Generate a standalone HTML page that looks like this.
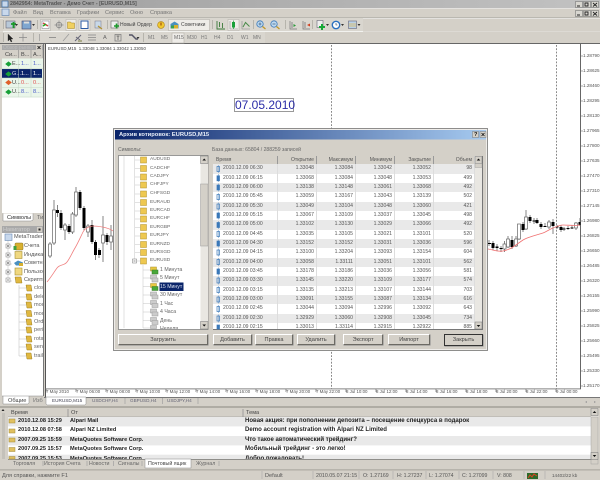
<!DOCTYPE html>
<html><head><meta charset="utf-8"><style>
html,body{margin:0;padding:0;width:600px;height:480px;overflow:hidden;background:#d4d0c8}
#w{position:relative;width:600px;height:480px;overflow:hidden;font:5.6px "Liberation Sans","Noto Sans CJK SC",sans-serif;color:#333;filter:blur(.3px)}
.a,.t{position:absolute}
.t{white-space:nowrap;line-height:8px}
svg{position:absolute;left:0;top:0}
.r{position:absolute;left:0;width:262px;height:9.33px;display:flex;line-height:9.33px;white-space:nowrap;font-size:5.1px}
.r span{display:block;text-align:right;box-sizing:border-box;padding-right:2px;border-right:.5px solid #ddd}
.r .c0{width:65px;text-align:left;padding-left:10px}
.r .c1,.r .c2,.r .c3,.r .c4{width:39px}
.r .c5{width:41px}
.g{background:#e9e9e9}.wh{background:#fff}
.b{position:absolute;box-sizing:border-box;border:1px solid;border-color:#fff #6c6a64 #6c6a64 #fff;background:#d4d0c8;text-align:center;line-height:10px;color:#444;box-shadow:.5px .5px 0 #888}
.mr{position:absolute;left:8px;width:582px;height:9.33px;line-height:9.33px;font-weight:bold;white-space:nowrap;color:#222}
.mr b{position:absolute;top:0}
.mr b.s{font-size:6.050px}
.h{position:absolute;line-height:8px;color:#444;padding-left:3px;height:9px;box-sizing:border-box}
.p{color:#555;font-size:4.600px}
.x{color:#555;font-size:4.400px}
.y{color:#666;font-size:4.800px}
.z{color:#666;font-size:5.200px}
.k{color:#666;font-size:5.300px}
.m{color:#777}
</style></head><body><div id="w">

<!-- title bar -->
<div class="a" style="left:0;top:0;width:600px;height:8px;background:linear-gradient(90deg,#9e9e9e,#c2c2c2)"></div>
<div class="t" style="left:10px;top:0;color:#555;font-weight:bold;font-size:5.300px">2842954: MetaTrader - Демо Счет - [EURUSD,M15]</div>

<!-- base svg -->
<svg width="600" height="480" viewBox="0 0 600 480">
<rect x="0" y="8" width="600" height=".6" fill="#eee"/>
<rect x="0" y="17" width="600" height=".6" fill="#aaa8a2"/>
<rect x="0" y="18" width="600" height=".6" fill="#eee"/>
<rect x="3" y="18" width="360" height="13" fill="#d9d6cf"/>
<rect x="3" y="31" width="360" height=".7" fill="#fff"/>
<rect x="0" y="31.500" width="600" height=".5" fill="#e6e4df"/>
<rect x="3" y="32" width="262" height="12" fill="#d9d6cf"/>
<rect x="0" y="43" width="600" height="1" fill="#666"/>
<!-- title icon -->
<rect x="2" y="1" width="6" height="6" fill="#c8d8ec" stroke="#3a6ea5" stroke-width=".7"/>
<rect x="2" y="9" width="7" height="6.500" fill="#c8d8ec" stroke="#6a8ab5" stroke-width=".7"/>
<!-- window buttons -->
<g fill="#d8d6d0" stroke="#777" stroke-width=".6">
<rect x="575.500" y="1.500" width="7" height="6"/><rect x="583.500" y="1.500" width="7" height="6"/><rect x="591.500" y="1.500" width="7" height="6"/>
<rect x="575.500" y="10.500" width="7" height="6"/><rect x="583.500" y="10.500" width="7" height="6"/><rect x="591.500" y="10.500" width="7" height="6"/></g>
<g fill="none" stroke="#222" stroke-width=".9">
<path d="M577 6h3M585 3h3v3h-3zM593 3l4 3.500M597 3l-4 3.500M577 15h3M585 12h3v3h-3zM593 12l4 3.500M597 12l-4 3.500"/></g>

<!-- toolbar separators -->
<g fill="#a8a59e"><rect x="3" y="20" width=".7" height="9"/><rect x="37" y="20" width=".7" height="9"/><rect x="107" y="20" width=".7" height="9"/><rect x="212" y="20" width=".7" height="9"/><rect x="253" y="20" width=".7" height="9"/><rect x="285" y="20" width=".7" height="9"/><rect x="312" y="20" width=".7" height="9"/><rect x="3" y="33" width=".7" height="9"/><rect x="33" y="33" width=".7" height="9"/><rect x="143" y="33" width=".7" height="9"/></g>
<!-- toolbar pressed -->
<g fill="#eeece8" stroke="#b8b5ae" stroke-width=".6"><rect x="40.500" y="19.500" width="10" height="11"/><rect x="66" y="19.500" width="10" height="11"/><rect x="79" y="19.500" width="11" height="11"/><rect x="168.500" y="19.500" width="41" height="11"/><rect x="228" y="19.500" width="11" height="11"/><rect x="172" y="33" width="12" height="10"/></g>
<!-- tb1 icons -->
<rect x="6" y="21" width="9" height="7" fill="#b8c8d8" stroke="#667" stroke-width=".6"/><path d="M11 24h5M13.500 22v6" stroke="#1a9a2a" stroke-width="1.800"/><path d="M15 24l3 0-1.500 2z" fill="#333"/>
<rect x="22" y="21" width="9" height="8" fill="#7fa6d0" stroke="#446" stroke-width=".6"/><rect x="24" y="21.500" width="5" height="2" fill="#ddd"/><path d="M32 24l3 0-1.500 2z" fill="#333"/>
<rect x="42" y="21" width="7" height="7.500" fill="#fff" stroke="#778" stroke-width=".5"/><path d="M43 23l5 3" stroke="#c44" stroke-width="1.500"/><path d="M43 26l3-2" stroke="#2a2" stroke-width="1.500"/>
<circle cx="59" cy="25" r="2.700" fill="none" stroke="#888" stroke-width=".8"/><path d="M59 20.500v9M54.500 25h9" stroke="#888" stroke-width=".7"/>
<path d="M67.500 22h3l1 1h3v5.500h-7z" fill="#f0d060" stroke="#a08020" stroke-width=".5"/>
<rect x="81" y="21" width="7" height="7.500" fill="#fff" stroke="#2a5aa5" stroke-width="1"/>
<rect x="95" y="21" width="6" height="7" fill="#c8d8e8" stroke="#778" stroke-width=".5"/><path d="M98 26l4 3" stroke="#b09030" stroke-width="1.200"/>
<rect x="111" y="21" width="7" height="7" fill="#eee" stroke="#666" stroke-width=".6"/><path d="M114 26h5M116.500 23.500v5" stroke="#1a9a2a" stroke-width="1.600"/>
<circle cx="161" cy="25" r="3.400" fill="#f0c830" stroke="#b08010" stroke-width=".6"/><rect x="160.400" y="22.500" width="1.200" height="3" fill="#a05010"/>
<path d="M170.500 24l4-2.500 4 2.500v4.500h-8z" fill="#4a90c0"/><rect x="174" y="25" width="4" height="3.500" fill="#d8b030"/><rect x="171" y="25.500" width="3" height="3" fill="#3aa050"/>
<path d="M217 21v8h8M219.500 22v5M222.500 23v5" stroke="#3a7a3a" stroke-width=".9" fill="none"/>
<path d="M230 21v8h8" stroke="#888" fill="none" stroke-width=".6"/><rect x="232" y="22" width="3" height="5.500" fill="#18a038"/><path d="M233.500 20.500v8.500" stroke="#18a038" stroke-width=".7"/>
<path d="M242 21v8h8" stroke="#888" fill="none" stroke-width=".6"/><path d="M243 27l2.500-4.500 4 4" stroke="#4a8a4a" fill="none"/>
<circle cx="260" cy="24" r="3.200" fill="#bcd8f0" stroke="#3a78b8" stroke-width=".8"/><path d="M262.500 26.500l3 2.500" stroke="#c0982a" stroke-width="1.300"/><path d="M258.500 24h3M260 22.500v3" stroke="#246" stroke-width=".6"/>
<circle cx="274" cy="24" r="3.200" fill="#bcd8f0" stroke="#3a78b8" stroke-width=".8"/><path d="M276.500 26.500l3 2.500" stroke="#c0982a" stroke-width="1.300"/><path d="M272.500 24h3" stroke="#246" stroke-width=".6"/>
<path d="M290 21v8h7" stroke="#777" fill="none" stroke-width=".7"/><path d="M292 22v6" stroke="#888"/><path d="M293.500 24l2.500 1.500-2.500 1.500z" fill="#2a9a3a"/>
<path d="M303 21v8h7" stroke="#777" fill="none" stroke-width=".7"/><path d="M305 22v6" stroke="#888"/><path d="M307 25l3-1.500v3z" fill="#d04020"/>
<rect x="317" y="20.500" width="6" height="7" fill="#eee" stroke="#667" stroke-width=".6"/><path d="M319 27h6M322 24v6" stroke="#18a838" stroke-width="2"/><path d="M326 24l3 0-1.500 2z" fill="#333"/>
<circle cx="336" cy="25" r="3.700" fill="#fff" stroke="#2a70c0" stroke-width="1.400"/><path d="M336 23v2h1.500" stroke="#246" stroke-width=".6" fill="none"/><path d="M341 24l3 0-1.500 2z" fill="#333"/>
<rect x="348.500" y="21" width="8" height="7.500" fill="#b8d0e8" stroke="#667" stroke-width=".6"/><path d="M349 24h7M349 26h7" stroke="#e0b850" stroke-width=".8"/><path d="M357.500 24l3 0-1.500 2z" fill="#333"/>
<!-- tb2 icons -->
<path d="M8 34v7l1.800-1.500 1.200 2.500 1-.5-1.200-2.500h2.200z" fill="#222" stroke="#222" stroke-width=".3"/>
<path d="M23 33.500v8M19 37.500h8" stroke="#888" stroke-width=".7"/>
<path d="M39.500 34v7" stroke="#999" stroke-width=".7"/>
<path d="M49 37.500h7" stroke="#777" stroke-width=".7"/>
<path d="M63 41l6-7" stroke="#999" stroke-width=".7"/>
<path d="M75 41l6-6M76 37l4 3" stroke="#667" stroke-width="1"/><rect x="78" y="40" width="4" height="2" fill="#aa8"/>
<path d="M88 35h8M88 37.500h8M88 40h8" stroke="#888" stroke-width=".7"/>
<rect x="115" y="34.500" width="6" height="6.500" fill="none" stroke="#777" stroke-width=".7"/><path d="M116.500 36h3M118 36v4" stroke="#555" stroke-width=".7"/>
<path d="M129 35h3l4 4h2" stroke="#556" stroke-width="1.400" fill="none"/><path d="M136.500 37l3 0-1.500 2z" fill="#333"/>

<!-- left panel -->
<rect x="2" y="44" width="42" height="178" fill="#d4d0c8"/>
<rect x="2" y="45" width="41" height="5.500" fill="#a9a9a9"/>
<rect x="2" y="50" width="42" height="170" fill="#fff"/>
<rect x="2" y="50" width="42" height="8.500" fill="#d4d0c8"/>
<rect x="2" y="58.500" width="42" height="39" fill="#eaf6ea"/>
<rect x="2" y="69" width="40" height="9" fill="#0a246a"/>
<g stroke="#c6d8c6" stroke-width=".5"><path d="M2 68.800h41M2 78h41M2 87.500h41M2 97h41M18.500 58v39M31 58v39"/></g>
<path d="M18.500 50v8M31 50v8M43 50v8" stroke="#888" stroke-width=".6"/>
<path d="M6 64l2.500-2 2.500 2-2.500 2z" fill="#18a038" stroke="#18a038"/>
<path d="M6 74l2.500-2 2.500 2-2.500 2z" fill="#18a038" stroke="#18a038"/>
<path d="M6 82.500l2.500-2 2.500 2-2.500 2z" fill="#e0602a" stroke="#e0602a"/>
<path d="M6 92l2.500-2 2.500 2-2.500 2z" fill="#18a038" stroke="#18a038"/>
<rect x="36" y="45" width="6" height="5" fill="#d4d0c8"/><path d="M37.500 46l3 3M40.500 46l-3 3" stroke="#111" stroke-width=".8"/>
<rect x="2" y="213" width="41" height="9" fill="#d4d0c8"/>
<path d="M3 213.500v7.500h28l2-1v-6.500" fill="#fff" stroke="#888" stroke-width=".5"/>
<rect x="43" y="44" width="1" height="352" fill="#777"/>
<rect x="2" y="226" width="41" height="7" fill="#a9a9a9"/>
<rect x="2" y="233" width="41" height="163" fill="#fff"/>
<rect x="2" y="396" width="41" height="10" fill="#d4d0c8"/>
<path d="M3 396v8h25l1-1v-7" fill="#fff" stroke="#888" stroke-width=".5"/>
<path d="M2 396h41" stroke="#888" stroke-width=".5"/>
<rect x="37" y="227" width="5" height="5" fill="#d4d0c8"/><rect x="38.500" y="228.500" width="2" height="2" fill="#222"/>
<path d="M8 240v42M8 246h4M8 255h4M8 264h4M8 272h4M8 281h4M19 285v71M19 288h7M19 297h7M19 305h7M19 314h7M19 322h7M19 330h7M19 339h7M19 347h7M19 356h7" stroke="#bbb" stroke-width=".5"/>
<g fill="#fff" stroke="#777" stroke-width=".5"><rect x="6" y="244" width="4" height="4"/><rect x="6" y="253" width="4" height="4"/><rect x="6" y="261" width="4" height="4"/><rect x="6" y="270" width="4" height="4"/><rect x="6" y="278" width="4" height="4"/></g>
<path d="M7 246h2M8 245v2M7 255h2M8 254v2M7 263h2M8 262v2M7 272h2M8 271v2M7 280h2" stroke="#222" stroke-width=".5"/>
<rect x="5" y="234" width="7" height="6.500" fill="#c8d8ec" stroke="#6a8ab5" stroke-width=".6"/>
<rect x="15" y="243" width="8" height="7" rx="1" fill="#d8b030" stroke="#8a7020" stroke-width=".5"/><rect x="13.500" y="246" width="3" height="4" fill="#40a040"/>
<rect x="15" y="251.500" width="7" height="7" fill="#f0d880" stroke="#a89030" stroke-width=".6"/>
<path d="M14 263l4-2.500 5 2-1 3h-6z" fill="#4a90c0"/><rect x="19" y="263" width="4" height="3" fill="#d8b030"/>
<rect x="15" y="268" width="7" height="7" fill="#f0d880" stroke="#a89030" stroke-width=".6"/>
<path d="M15 277h6l1 6h-6z" fill="#e0b840" stroke="#a08020" stroke-width=".5"/>
<g fill="#e0b840" stroke="#a08020" stroke-width=".5"><path d="M26 285h5l1 6h-5z"/><path d="M26 294h5l1 6h-5z"/><path d="M26 302h5l1 6h-5z"/><path d="M26 310.500h5l1 6h-5z"/><path d="M26 319h5l1 6h-5z"/><path d="M26 327h5l1 6h-5z"/><path d="M26 336h5l1 6h-5z"/><path d="M26 344h5l1 6h-5z"/><path d="M26 353h5l1 6h-5z"/></g>

<!-- chart -->
<rect x="45" y="44" width="536" height="345" fill="#fff"/>
<rect x="581" y="44" width="19" height="353" fill="#fff"/>
<rect x="45" y="389" width="555" height="8" fill="#fff"/>
<rect x="45" y="44" width="1" height="353" fill="#555"/>
<rect x="580" y="44" width="1" height="345" fill="#666"/>
<rect x="45" y="388.500" width="536" height=".8" fill="#666"/>
<path d="M331.500 45v344M556.500 45v344" stroke="#555" stroke-width=".7" stroke-dasharray="1.800 1.500"/>
<path d="M581 56h2M581 71h2M581 86h2M581 101h2M581 116h2M581 131h2M581 146h2M581 161h2M581 176h2M581 191h2M581 206h2M581 221h2M581 236h2M581 251h2M581 266h2M581 281h2M581 296h2M581 311h2M581 326h2M581 341h2M581 356h2M581 371h2M581 386h2M46 389v3M76 389v3M106 389v3M136 389v3M166 389v3M196 389v3M226 389v3M256 389v3M286 389v3M316 389v3M346 389v3M376 389v3M406 389v3M436 389v3M466 389v3M496 389v3M526 389v3M556 389v3" stroke="#555" stroke-width=".6"/>
<!-- left candles -->
<g stroke="#666" stroke-width=".8">
<path d="M50 242v16M54 200v45M57.500 205v12M61 210v20M65 223v17M69 224v10M72.500 212v22M76 187v30M80 190v20M84 206v24M88 224v13M92 220v24M95.500 240v20M99 248v10M103 216v46M107 233v12M111 225v25M115 228v12"/>
</g>
<g fill="#fff" stroke="#666" stroke-width=".7">
<rect x="48.500" y="244" width="3" height="12"/><rect x="52.500" y="210" width="3" height="33"/><rect x="63.500" y="225" width="3" height="5"/><rect x="71" y="214" width="3" height="18"/><rect x="74.500" y="192" width="3" height="23"/><rect x="86.500" y="226" width="3" height="6"/><rect x="101.500" y="235" width="3" height="8"/><rect x="109.500" y="236" width="3" height="6"/></g>
<g fill="#000"><rect x="56" y="210" width="3" height="3"/><rect x="59.500" y="213" width="3" height="15"/><rect x="67.500" y="226" width="3" height="6"/><rect x="78.500" y="192" width="3" height="16"/><rect x="82.500" y="208" width="3" height="20"/><rect x="90.500" y="225" width="3" height="17"/><rect x="94" y="242" width="3" height="13"/><rect x="98" y="250" width="3" height="5"/><rect x="105.500" y="235" width="3" height="7"/></g>
<path d="M47 282C52 276 54 272 57 268S64 266 67 262 72 253 75 248 81 236 83 232 90 226 93 226 108 227 113 231" fill="none" stroke="#f08080" stroke-width=".8"/>
<!-- right candles -->
<path d="M489 240v6M493 241v9M497 244v7M501 246v6M504.500 241v11M508 236v12M512 236v13M516 236v11M519 224v16M523 222v10M526 210v20M530 215v8M534 218v6M537 218v6M541 222v7M545 223v4M549 220v9M553 219v15M557 225v4M561 225v7M564 227v4M568 226v4M572 225v4M576 222v8M580 218v8" stroke="#666" stroke-width=".8"/>
<g fill="#fff" stroke="#666" stroke-width=".7"><rect x="503" y="244" width="3" height="5"/><rect x="506.500" y="239" width="3" height="8"/><rect x="514.500" y="239" width="3" height="7"/><rect x="517.500" y="224" width="3" height="15"/><rect x="524.500" y="217" width="3" height="12"/><rect x="547.500" y="222" width="3" height="5"/><rect x="574.500" y="223" width="3" height="5"/></g>
<g fill="#000"><rect x="488" y="243" width="3" height="1"/><rect x="491.500" y="243" width="3" height="5"/><rect x="495.500" y="246.500" width="3" height="1.500"/><rect x="499.500" y="248" width="3" height="1"/><rect x="510.500" y="240" width="3" height="7"/><rect x="521.500" y="224" width="3" height="6"/><rect x="528.500" y="217" width="3" height="4"/><rect x="532.500" y="220.500" width="3" height="1"/><rect x="535.500" y="220" width="3" height="3"/><rect x="539.500" y="224" width="3" height="3"/><rect x="543.500" y="226" width="3" height="1"/><rect x="551.500" y="222" width="3" height="4"/><rect x="555.500" y="226.500" width="3" height="1"/><rect x="559.500" y="227" width="3" height="3"/><rect x="562.500" y="228.500" width="3" height="1"/><rect x="566.500" y="228" width="3" height="1"/><rect x="570.500" y="227.500" width="3" height="1"/><rect x="578.500" y="222" width="2" height="3"/></g>
<path d="M488 249C494 250 498 252 503 251S510 249 513 247 520 242 523 240 530 237 533 236 540 234 543 233 550 229 553 228 559 225 563 225 575 226 580 225" fill="none" stroke="#f07070" stroke-width=".8"/>
<!-- chart tabs -->
<rect x="44" y="397" width="556" height="10" fill="#d4d0c8"/>
<rect x="44" y="397" width="556" height="1" fill="#777"/>
<path d="M46 397v7l1 1h38l1-1v-7z" fill="#fff" stroke="#888" stroke-width=".5"/>
<path d="M125 398v6M162.500 398v6M198 398v6" stroke="#999" stroke-width=".6"/>
<path d="M587 401l-2 1 2 1zM594 401l2 1-2 1z" fill="#999"/>
<rect x="0" y="406.500" width="600" height="1" fill="#8a8780"/>

<!-- terminal -->
<rect x="0" y="408" width="7" height="62" fill="#d4d0c8"/>
<path d="M3 409l1.500 2H1.500z" fill="#222"/>
<rect x="2" y="413" width="3" height="46" fill="#bdbab3" opacity=".7"/>
<rect x="8" y="408.500" width="583" height="8.500" fill="#d4d0c8"/>
<path d="M8 417h583" stroke="#888" stroke-width=".6"/>
<path d="M68 409v8M243 409v8" stroke="#888" stroke-width=".7"/>
<rect x="8" y="417" width="583" height="42" fill="#fff"/>
<rect x="8" y="417" width="583" height="9.400" fill="#e9e9e9"/>
<rect x="8" y="436" width="583" height="9.400" fill="#e9e9e9"/>
<rect x="8" y="454.700" width="583" height="4.300" fill="#e9e9e9"/>
<path d="M8 459.300h583" stroke="#666" stroke-width=".7"/>
<rect x="591" y="408" width="7.500" height="52" fill="#ece9e3"/>
<rect x="591" y="417" width="7" height="47" fill="#d4d0c8" stroke="#999" stroke-width=".4"/>
<rect x="591" y="408.500" width="7" height="7" fill="#d4d0c8" stroke="#777" stroke-width=".5"/><path d="M594.500 411l1.800 2h-3.600z" fill="#111"/>
<rect x="591" y="452.500" width="7" height="7" fill="#d4d0c8" stroke="#777" stroke-width=".5"/><path d="M594.500 457l1.800-2h-3.600z" fill="#111"/>
<g fill="#e0c060" stroke="#a08838" stroke-width=".5"><rect x="9" y="419" width="6" height="4"/><rect x="9" y="429" width="6" height="4"/><rect x="9" y="438" width="6" height="4"/><rect x="9" y="447.500" width="6" height="4"/><rect x="9" y="456.500" width="6" height="2.500"/></g>
<rect x="145" y="459" width="46" height="9" fill="#fff" stroke="#888" stroke-width=".5"/>
<path d="M43 461v5M87 461v5M113.500 461v5M142 461v5M219 461v5" stroke="#999" stroke-width=".6"/>
<rect x="0" y="469.500" width="600" height=".8" fill="#9a978f"/>
<path d="M262 471v8M313 471v8M359 471v8M393 471v8M426 471v8M459 471v8M493 471v8M524 471v8M545 471v8" stroke="#aaa" stroke-width=".6"/>
<rect x="527" y="473" width="11" height="6" fill="#2a6a2a"/><path d="M528 478l2-3 2 2 2-3 3 2" stroke="#e04020" stroke-width="1" fill="none"/>

<!-- dialog -->
<rect x="113.500" y="128.500" width="374" height="222" fill="#d4d0c8" stroke="#777" stroke-width=".8"/>
<rect x="114.500" y="129.500" width="372" height="220" fill="none" stroke="#fff" stroke-width=".6"/>
<defs><linearGradient id="tg" x1="0" x2="1" y1="0" y2="0"><stop offset="0" stop-color="#0a246a"/><stop offset="1" stop-color="#a6caf0"/></linearGradient></defs>
<rect x="115" y="130" width="371" height="9.500" fill="url(#tg)"/>
<rect x="472.500" y="131.500" width="6" height="6" fill="#d4d0c8" stroke="#666" stroke-width=".4"/>
<rect x="480" y="131.500" width="6" height="6" fill="#d4d0c8" stroke="#666" stroke-width=".4"/>
<path d="M481.500 133l3 3M484.500 133l-3 3" stroke="#111" stroke-width=".8"/>
<!-- tree box -->
<rect x="118.500" y="155.500" width="89.500" height="174" fill="#fff" stroke="#777" stroke-width=".7"/>
<rect x="200.500" y="156" width="7.500" height="173" fill="#e9e7e2"/>
<rect x="200.500" y="156" width="7.500" height="7.500" fill="#d4d0c8" stroke="#777" stroke-width=".5"/><path d="M204.200 158.500l1.800 2h-3.600z" fill="#111"/>
<rect x="200.500" y="321.500" width="7.500" height="7.500" fill="#d4d0c8" stroke="#777" stroke-width=".5"/><path d="M204.200 326.500l1.800-2h-3.600z" fill="#111"/>
<rect x="200.500" y="184" width="7.500" height="62" fill="#d4d0c8" stroke="#999" stroke-width=".5"/>
<path d="M124 156v172M134.500 156v104M135 160h5M135 168.500h5M135 177h5M135 185h5M135 194h5M135 202.500h5M135 211h5M135 219h5M135 227.500h5M135 236h5M135 244.500h5M135 252.500h5M135 261h5M143 265v63M143 270h10M143 278h10M143 286.500h10M143 295h10M143 303.500h10M143 312h10M143 320.500h10M143 328h10" stroke="#c4c4c4" stroke-width=".5"/>
<rect x="132.500" y="259" width="4" height="4" fill="#fff" stroke="#777" stroke-width=".5"/><path d="M133.500 261h2" stroke="#222" stroke-width=".5"/>
<g fill="#eec850" stroke="#b09028" stroke-width=".5"><rect x="140.500" y="157" width="6" height="6"/><rect x="140.500" y="165.500" width="6" height="6"/><rect x="140.500" y="174" width="6" height="6"/><rect x="140.500" y="182" width="6" height="6"/><rect x="140.500" y="191" width="6" height="6"/><rect x="140.500" y="199.500" width="6" height="6"/><rect x="140.500" y="208" width="6" height="6"/><rect x="140.500" y="216" width="6" height="6"/><rect x="140.500" y="224.500" width="6" height="6"/><rect x="140.500" y="233" width="6" height="6"/><rect x="140.500" y="241.500" width="6" height="6"/><rect x="140.500" y="249.500" width="6" height="6"/><rect x="140.500" y="258" width="6" height="6"/></g>
<rect x="159.500" y="282.500" width="24" height="8.500" fill="#0a246a"/>
<g stroke-width=".5"><rect x="150.500" y="267" width="6" height="4" fill="#e8c840" stroke="#a89030"/><rect x="152" y="270" width="6" height="4" fill="#48a838" stroke="#387828"/>
<rect x="150.500" y="275" width="6" height="4" fill="#ccc" stroke="#999"/><rect x="152" y="278" width="6" height="4" fill="#ccc" stroke="#999"/>
<rect x="150.500" y="283.500" width="6" height="4" fill="#e8c840" stroke="#a89030"/><rect x="152" y="286.500" width="6" height="4" fill="#48a838" stroke="#387828"/>
<rect x="150.500" y="292" width="6" height="4" fill="#ccc" stroke="#999"/><rect x="152" y="295" width="6" height="4" fill="#ccc" stroke="#999"/>
<rect x="150.500" y="300.500" width="6" height="4" fill="#ccc" stroke="#999"/><rect x="152" y="303.500" width="6" height="4" fill="#ccc" stroke="#999"/>
<rect x="150.500" y="309" width="6" height="4" fill="#ccc" stroke="#999"/><rect x="152" y="312" width="6" height="4" fill="#ccc" stroke="#999"/>
<rect x="150.500" y="317.500" width="6" height="4" fill="#ccc" stroke="#999"/><rect x="152" y="320.500" width="6" height="4" fill="#ccc" stroke="#999"/>
<rect x="150.500" y="325.500" width="6" height="3" fill="#ccc" stroke="#999"/></g>
</svg>

<!-- menu + toolbar text -->
<div class="t m" style="left:13px;top:9px">Файл</div>
<div class="t m" style="left:33px;top:9px">Вид</div>
<div class="t m" style="left:50px;top:9px">Вставка</div>
<div class="t m" style="left:77px;top:9px">Графики</div>
<div class="t m" style="left:105px;top:9px">Сервис</div>
<div class="t m" style="left:130px;top:9px">Окно</div>
<div class="t m" style="left:150px;top:9px">Справка</div>
<div class="t" style="left:120px;top:21px;color:#444;font-size:5px">Новый Ордер</div>
<div class="t" style="left:181px;top:21px;color:#444;font-size:5px">Советники</div>
<div class="t m" style="left:148px;top:34px;font-size:5px">M1</div>
<div class="t m" style="left:161px;top:34px;font-size:5px">M5</div>
<div class="t" style="left:174px;top:34px;color:#666;font-size:5px">M15</div>
<div class="t m" style="left:187px;top:34px;font-size:5px">M30</div>
<div class="t m" style="left:201px;top:34px;font-size:5px">H1</div>
<div class="t m" style="left:214px;top:34px;font-size:5px">H4</div>
<div class="t m" style="left:227px;top:34px;font-size:5px">D1</div>
<div class="t m" style="left:241px;top:34px;font-size:5px">W1</div>
<div class="t m" style="left:253px;top:34px;font-size:5px">MN</div>
<div class="t" style="left:103px;top:34px;color:#666">A</div>

<!-- price axis -->
<div class="t p" style="left:583px;top:52px">1.28790</div>
<div class="t p" style="left:583px;top:67px">1.28625</div>
<div class="t p" style="left:583px;top:82px">1.28460</div>
<div class="t p" style="left:583px;top:97px">1.28295</div>
<div class="t p" style="left:583px;top:112px">1.28130</div>
<div class="t p" style="left:583px;top:127px">1.27965</div>
<div class="t p" style="left:583px;top:142px">1.27800</div>
<div class="t p" style="left:583px;top:157px">1.27635</div>
<div class="t p" style="left:583px;top:172px">1.27470</div>
<div class="t p" style="left:583px;top:187px">1.27310</div>
<div class="t p" style="left:583px;top:202px">1.27145</div>
<div class="t p" style="left:583px;top:217px">1.26980</div>
<div class="t p" style="left:583px;top:232px">1.26825</div>
<div class="t p" style="left:583px;top:247px">1.26650</div>
<div class="t p" style="left:583px;top:262px">1.26485</div>
<div class="t p" style="left:583px;top:277px">1.26320</div>
<div class="t p" style="left:583px;top:292px">1.26155</div>
<div class="t p" style="left:583px;top:307px">1.25990</div>
<div class="t p" style="left:583px;top:322px">1.25825</div>
<div class="t p" style="left:583px;top:337px">1.25660</div>
<div class="t p" style="left:583px;top:352px">1.25495</div>
<div class="t p" style="left:583px;top:367px">1.25330</div>
<div class="t p" style="left:583px;top:382px">1.25170</div>

<!-- time axis -->
<div class="t x" style="left:46px;top:388px">7 May 2010</div>
<div class="t x" style="left:76px;top:388px">7 May 06:00</div>
<div class="t x" style="left:106px;top:388px">7 May 08:00</div>
<div class="t x" style="left:136px;top:388px">7 May 10:00</div>
<div class="t x" style="left:166px;top:388px">7 May 12:00</div>
<div class="t x" style="left:196px;top:388px">7 May 14:00</div>
<div class="t x" style="left:226px;top:388px">7 May 16:00</div>
<div class="t x" style="left:256px;top:388px">7 May 18:00</div>
<div class="t x" style="left:286px;top:388px">7 May 20:00</div>
<div class="t x" style="left:316px;top:388px">7 May 22:00</div>
<div class="t x" style="left:346px;top:388px">8 Jul 10:00</div>
<div class="t x" style="left:376px;top:388px">8 Jul 12:00</div>
<div class="t x" style="left:406px;top:388px">8 Jul 14:00</div>
<div class="t x" style="left:436px;top:388px">8 Jul 16:00</div>
<div class="t x" style="left:466px;top:388px">8 Jul 18:00</div>
<div class="t x" style="left:496px;top:388px">8 Jul 20:00</div>
<div class="t x" style="left:526px;top:388px">8 Jul 22:00</div>
<div class="t x" style="left:556px;top:388px">9 Jul 00:00</div>

<!-- chart text -->
<div class="t" style="left:48px;top:45px;color:#444;font-size:4.400px">EURUSD,M15&nbsp; 1.33048 1.33084 1.33042 1.33050</div>
<div class="a" style="left:234px;top:98px;width:60px;height:14px;box-sizing:border-box;border:1px solid #999;color:#2a2ca8;font-size:12px;line-height:12px;text-align:center;background:#fff;white-space:nowrap">07.05.2010</div>

<!-- left panel text -->
<div class="t" style="left:3px;top:43.500px;color:#bbb;font-size:5px">Обзор рынка</div>
<div class="t" style="left:5px;top:50.500px;color:#444">Си...</div><div class="t" style="left:21px;top:50.500px;color:#444">B...</div><div class="t" style="left:33px;top:50.500px;color:#444">A...</div>
<div class="t" style="left:12px;top:60px;color:#444">E...</div><div class="t" style="left:21px;top:60px;color:#4a5ac8">1...</div><div class="t" style="left:33px;top:60px;color:#4a5ac8">1...</div>
<div class="t" style="left:12px;top:70px;color:#dde">G...</div><div class="t" style="left:21px;top:70px;color:#fff">1...</div><div class="t" style="left:33px;top:70px;color:#fff">1...</div>
<div class="t" style="left:12px;top:79px;color:#444">U...</div><div class="t" style="left:21px;top:79px;color:#e05050">0...</div><div class="t" style="left:33px;top:79px;color:#e05050">0...</div>
<div class="t" style="left:12px;top:88px;color:#444">U...</div><div class="t" style="left:21px;top:88px;color:#4a5ac8">8...</div><div class="t" style="left:33px;top:88px;color:#4a5ac8">8...</div>
<div class="t" style="left:7px;top:214px">Символы</div>
<div class="t" style="left:37px;top:214px;color:#666">Ти</div>
<div class="t" style="left:3px;top:225.500px;color:#ccc">Навигатор</div>
<div class="t" style="left:14px;top:233px;color:#555">MetaTrader</div>
<div class="t" style="left:24px;top:242px;color:#555">Счета</div>
<div class="a" style="left:24px;top:251px;width:19px;height:34px;overflow:hidden;color:#555">
<div class="t" style="left:0;top:0">Индикат</div>
<div class="t" style="left:0;top:8px">Советник</div>
<div class="t" style="left:0;top:16.500px">Пользов</div>
<div class="t" style="left:0;top:25px">Скрипты</div></div>
<div class="a" style="left:34px;top:284px;width:9px;height:76px;overflow:hidden;color:#666">
<div class="t" style="left:0;top:0">close</div><div class="t" style="left:0;top:9px">delete</div><div class="t" style="left:0;top:17px">modify</div><div class="t" style="left:0;top:25.500px">modify</div><div class="t" style="left:0;top:34px">Order</div><div class="t" style="left:0;top:42px">period</div><div class="t" style="left:0;top:51px">rotate</div><div class="t" style="left:0;top:59px">send</div><div class="t" style="left:0;top:68px">trail</div></div>
<div class="t" style="left:8px;top:397px;color:#444">Общие</div>
<div class="t" style="left:33px;top:397px;color:#777">Изб</div>

<!-- chart tabs -->
<div class="t" style="left:52px;top:397px;color:#445;font-size:4.700px">EURUSD,M15</div>
<div class="t" style="left:92px;top:397px;color:#667;font-size:4.600px">USDCHF,H4</div>
<div class="t" style="left:130px;top:397px;color:#667;font-size:4.600px">GBPUSD,H4</div>
<div class="t" style="left:167px;top:397px;color:#667;font-size:4.600px">USDJPY,H4</div>

<!-- terminal text -->
<div class="h" style="left:8px;top:408.500px;width:60px">Время</div>
<div class="h" style="left:68px;top:408.500px;width:175px">От</div>
<div class="h" style="left:243px;top:408.500px;width:200px">Тема</div>
<div class="mr" style="top:417px"><b style="left:10px">2010.12.08 15:29</b><b style="left:62px">Alpari Mail</b><b class="s" style="left:237px">Новая акция: при пополнении депозита – посещение спецкурса в подарок</b></div>
<div class="mr" style="top:426.300px"><b style="left:10px">2010.12.08 07:58</b><b style="left:62px">Alpari NZ Limited</b><b class="s" style="left:237px">Demo account registration with Alpari NZ Limited</b></div>
<div class="mr" style="top:435.700px"><b style="left:10px">2007.09.25 15:59</b><b style="left:62px">MetaQuotes Software Corp.</b><b class="s" style="left:237px">Что такое автоматический трейдинг?</b></div>
<div class="mr" style="top:445px"><b style="left:10px">2007.09.25 15:57</b><b style="left:62px">MetaQuotes Software Corp.</b><b class="s" style="left:237px">Мобильный трейдинг - это легко!</b></div>
<div class="a" style="left:8px;top:454.700px;width:582px;height:4.500px;overflow:hidden"><div class="mr" style="left:0;top:0"><b style="left:10px">2007.09.25 15:53</b><b style="left:62px">MetaQuotes Software Corp.</b><b class="s" style="left:237px">Добро пожаловать!</b></div></div>
<div class="t k" style="left:13px;top:460px">Торговля</div>
<div class="t k" style="left:44px;top:460px">История Счета</div>
<div class="t k" style="left:89px;top:460px">Новости</div>
<div class="t k" style="left:118px;top:460px">Сигналы</div>
<div class="t k" style="left:148px;top:460px;color:#444">Почтовый ящик</div>
<div class="t k" style="left:196px;top:460px">Журнал</div>

<!-- status -->
<div class="t" style="left:2px;top:472px;color:#555">Для справки, нажмите F1</div>
<div class="t" style="left:265px;top:472px;color:#555">Default</div>
<div class="t" style="left:316px;top:472px;color:#555;font-size:5.300px">2010.05.07 21:15</div>
<div class="t" style="left:363px;top:472px;color:#555;font-size:5.200px">O: 1.27169</div>
<div class="t" style="left:397px;top:472px;color:#555;font-size:5.200px">H: 1.27237</div>
<div class="t" style="left:429px;top:472px;color:#555;font-size:5.200px">L: 1.27074</div>
<div class="t" style="left:462px;top:472px;color:#555;font-size:5.200px">C: 1.27099</div>
<div class="t" style="left:497px;top:472px;color:#555;font-size:5.200px">V: 808</div>
<div class="t" style="left:552px;top:472px;color:#555;font-size:4.600px">14402/22 kb</div>

<!-- dialog text -->
<div class="t" style="left:119px;top:131px;color:#e8eef8;font-weight:bold;font-size:5.800px">Архив котировок: EURUSD,M15</div>
<div class="t" style="left:474px;top:131px;color:#111;font-weight:bold">?</div>
<div class="t" style="left:118px;top:146px;color:#666;font-size:5.100px">Символы:</div>
<div class="t" style="left:212px;top:146px;color:#666;font-size:5.100px">База данных: 65804 / 288259 записей</div>
<div class="t y" style="left:150px;top:156px">AUDUSD</div>
<div class="t y" style="left:150px;top:164.500px">CADCHF</div>
<div class="t y" style="left:150px;top:173px">CADJPY</div>
<div class="t y" style="left:150px;top:181px">CHFJPY</div>
<div class="t y" style="left:150px;top:190px">CHFSGD</div>
<div class="t y" style="left:150px;top:198.500px">EURAUD</div>
<div class="t y" style="left:150px;top:207px">EURCAD</div>
<div class="t y" style="left:150px;top:215px">EURCHF</div>
<div class="t y" style="left:150px;top:223.500px">EURGBP</div>
<div class="t y" style="left:150px;top:232px">EURJPY</div>
<div class="t y" style="left:150px;top:240.500px">EURNZD</div>
<div class="t y" style="left:150px;top:248.500px">EURSGD</div>
<div class="t y" style="left:150px;top:257px">EURUSD</div>
<div class="t z" style="left:160px;top:266px">1 Минута</div>
<div class="t z" style="left:160px;top:274px">5 Минут</div>
<div class="t z" style="left:160px;top:282.500px;color:#d8e0f0">15 Минут</div>
<div class="t z" style="left:160px;top:291px">30 Минут</div>
<div class="t z" style="left:160px;top:299.500px">1 Час</div>
<div class="t z" style="left:160px;top:308px">4 Часа</div>
<div class="t z" style="left:160px;top:316.500px">День</div>
<div class="a z" style="left:160px;top:325px;width:30px;height:4px;overflow:hidden;line-height:8px">Неделя</div>

<!-- table -->
<div class="a" style="left:212.500px;top:155.500px;width:270px;height:174px;background:#fff;border:.6px solid #777;box-sizing:border-box"></div>
<div class="a" style="left:213px;top:156px;width:262px;height:173px;overflow:hidden;color:#555">
<div class="r" style="top:0;height:8px;line-height:8px;background:#d4d0c8"><span class="c0" style="padding-left:3px;border-right:1px solid #999">Время</span><span class="c1" style="border-right:1px solid #999">Открытие</span><span class="c2" style="border-right:1px solid #999">Максимум</span><span class="c3" style="border-right:1px solid #999">Минимум</span><span class="c4" style="border-right:1px solid #999">Закрытие</span><span class="c5">Объем</span></div>
<div class="r g" style="top:8.300px"><span class="c0">2010.12.09 06:30</span><span class="c1">1.33048</span><span class="c2">1.33084</span><span class="c3">1.33042</span><span class="c4">1.33052</span><span class="c5">98</span></div>
<div class="r wh" style="top:17.630px"><span class="c0">2010.12.09 06:15</span><span class="c1">1.33068</span><span class="c2">1.33084</span><span class="c3">1.33048</span><span class="c4">1.33053</span><span class="c5">499</span></div>
<div class="r g" style="top:26.960px"><span class="c0">2010.12.09 06:00</span><span class="c1">1.33138</span><span class="c2">1.33148</span><span class="c3">1.33061</span><span class="c4">1.33068</span><span class="c5">492</span></div>
<div class="r wh" style="top:36.290px"><span class="c0">2010.12.09 05:45</span><span class="c1">1.33059</span><span class="c2">1.33167</span><span class="c3">1.33043</span><span class="c4">1.33139</span><span class="c5">502</span></div>
<div class="r g" style="top:45.620px"><span class="c0">2010.12.09 05:30</span><span class="c1">1.33049</span><span class="c2">1.33104</span><span class="c3">1.33048</span><span class="c4">1.33060</span><span class="c5">421</span></div>
<div class="r wh" style="top:54.950px"><span class="c0">2010.12.09 05:15</span><span class="c1">1.33067</span><span class="c2">1.33109</span><span class="c3">1.33037</span><span class="c4">1.33045</span><span class="c5">498</span></div>
<div class="r g" style="top:64.280px"><span class="c0">2010.12.09 05:00</span><span class="c1">1.33102</span><span class="c2">1.33130</span><span class="c3">1.33029</span><span class="c4">1.33066</span><span class="c5">492</span></div>
<div class="r wh" style="top:73.610px"><span class="c0">2010.12.09 04:45</span><span class="c1">1.33035</span><span class="c2">1.33105</span><span class="c3">1.33021</span><span class="c4">1.33101</span><span class="c5">520</span></div>
<div class="r g" style="top:82.940px"><span class="c0">2010.12.09 04:30</span><span class="c1">1.33152</span><span class="c2">1.33152</span><span class="c3">1.33031</span><span class="c4">1.33036</span><span class="c5">596</span></div>
<div class="r wh" style="top:92.270px"><span class="c0">2010.12.09 04:15</span><span class="c1">1.33100</span><span class="c2">1.33204</span><span class="c3">1.33093</span><span class="c4">1.33154</span><span class="c5">604</span></div>
<div class="r g" style="top:101.600px"><span class="c0">2010.12.09 04:00</span><span class="c1">1.33058</span><span class="c2">1.33111</span><span class="c3">1.33051</span><span class="c4">1.33101</span><span class="c5">562</span></div>
<div class="r wh" style="top:110.930px"><span class="c0">2010.12.09 03:45</span><span class="c1">1.33178</span><span class="c2">1.33186</span><span class="c3">1.33036</span><span class="c4">1.33056</span><span class="c5">581</span></div>
<div class="r g" style="top:120.260px"><span class="c0">2010.12.09 03:30</span><span class="c1">1.33145</span><span class="c2">1.33220</span><span class="c3">1.33109</span><span class="c4">1.33177</span><span class="c5">574</span></div>
<div class="r wh" style="top:129.590px"><span class="c0">2010.12.09 03:15</span><span class="c1">1.33135</span><span class="c2">1.33213</span><span class="c3">1.33107</span><span class="c4">1.33144</span><span class="c5">703</span></div>
<div class="r g" style="top:138.920px"><span class="c0">2010.12.09 03:00</span><span class="c1">1.33091</span><span class="c2">1.33155</span><span class="c3">1.33087</span><span class="c4">1.33134</span><span class="c5">616</span></div>
<div class="r wh" style="top:148.250px"><span class="c0">2010.12.09 02:45</span><span class="c1">1.33044</span><span class="c2">1.33094</span><span class="c3">1.32996</span><span class="c4">1.33092</span><span class="c5">643</span></div>
<div class="r g" style="top:157.580px"><span class="c0">2010.12.09 02:30</span><span class="c1">1.32929</span><span class="c2">1.33060</span><span class="c3">1.32908</span><span class="c4">1.33045</span><span class="c5">734</span></div>
<div class="r wh" style="top:166.910px"><span class="c0">2010.12.09 02:15</span><span class="c1">1.33013</span><span class="c2">1.33114</span><span class="c3">1.32915</span><span class="c4">1.32922</span><span class="c5">885</span></div>
</div>
<svg width="600" height="480" viewBox="0 0 600 480" style="pointer-events:none">
<g fill="none" stroke="#3a78b8" stroke-width=".7">
<rect x="217" y="166.500" width="2.500" height="5"/><rect x="217" y="194.500" width="2.500" height="5"/><rect x="217" y="204" width="2.500" height="5"/><rect x="217" y="231.500" width="2.500" height="5"/><rect x="217" y="250" width="2.500" height="5"/><rect x="217" y="259.500" width="2.500" height="5"/><rect x="217" y="278" width="2.500" height="5"/><rect x="217" y="287.500" width="2.500" height="5"/><rect x="217" y="297" width="2.500" height="5"/><rect x="217" y="306.500" width="2.500" height="5"/><rect x="217" y="316" width="2.500" height="5"/></g>
<g fill="#3a78b8" stroke="#3a78b8" stroke-width=".7"><rect x="217" y="175.800" width="2.500" height="5"/><rect x="217" y="185" width="2.500" height="5"/><rect x="217" y="213" width="2.500" height="5"/><rect x="217" y="222.500" width="2.500" height="5"/><rect x="217" y="241" width="2.500" height="5"/><rect x="217" y="269" width="2.500" height="5"/><rect x="217" y="325" width="2.500" height="4"/></g>
<path d="M218.250 165v8M218.250 174v8M218.250 183.500v8M218.250 193v8M218.250 202.500v8M218.250 211.500v8M218.250 221v8M218.250 230v8M218.250 239.500v8M218.250 248.500v8M218.250 258v8M218.250 267.500v8M218.250 276.500v8M218.250 286v8M218.250 295.500v8M218.250 305v8M218.250 314.500v8" stroke="#3a78b8" stroke-width=".4"/>
<rect x="475" y="156" width="7" height="173" fill="#e9e7e2"/>
<rect x="475" y="156.500" width="7" height="7" fill="#d4d0c8" stroke="#777" stroke-width=".5"/><path d="M478.500 158.500l1.800 2h-3.600z" fill="#111"/>
<rect x="475" y="163.500" width="7" height="4" fill="#d4d0c8" stroke="#999" stroke-width=".4"/>
<rect x="475" y="322" width="7" height="7" fill="#d4d0c8" stroke="#777" stroke-width=".5"/><path d="M478.500 327l1.800-2h-3.600z" fill="#111"/>
</svg>

<!-- buttons -->
<div class="b" style="left:118px;top:334px;width:90px;height:11px">Загрузить</div>
<div class="b" style="left:213px;top:334px;width:39px;height:11px">Добавить</div>
<div class="b" style="left:255px;top:334px;width:38px;height:11px">Правка</div>
<div class="b" style="left:297px;top:334px;width:38px;height:11px">Удалить</div>
<div class="b" style="left:343px;top:334px;width:40px;height:11px">Экспорт</div>
<div class="b" style="left:388px;top:334px;width:42px;height:11px">Импорт</div>
<div class="b" style="left:444px;top:333.500px;width:39px;height:12px;border:1px solid #333;line-height:10.500px">Закрыть</div>

</div></body></html>
